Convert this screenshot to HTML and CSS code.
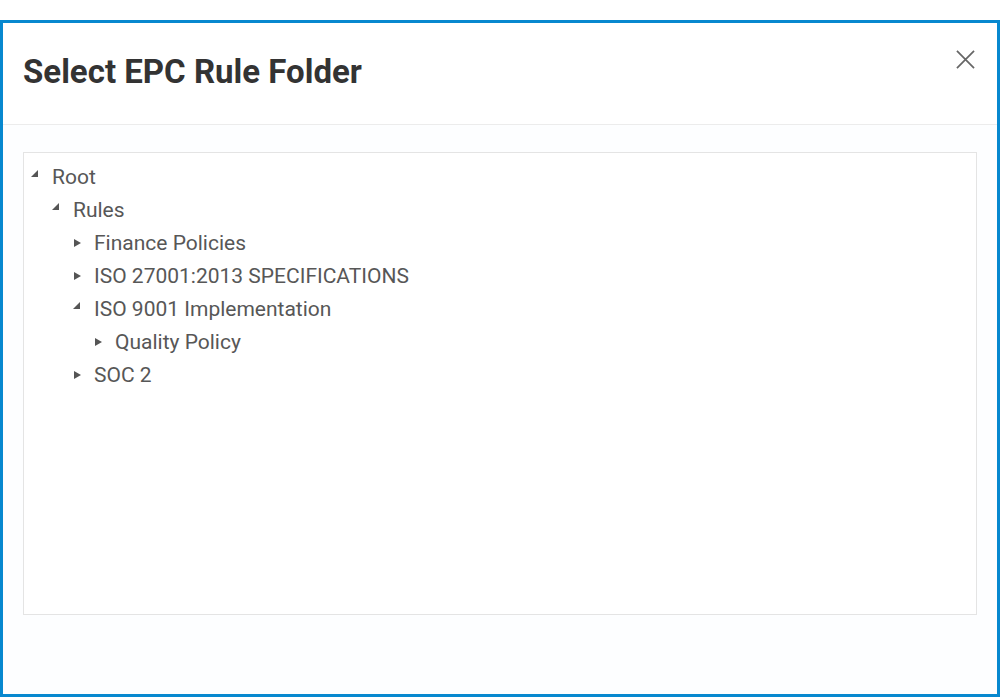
FILE: index.html
```html
<!DOCTYPE html>
<html lang="en">
<head>
<meta charset="utf-8">
<title>Select EPC Rule Folder</title>
<link rel="stylesheet" href="styles.css">
</head>
<body>
<div class="dialog">
  <div class="dialog-header">
    <h1 class="dialog-title">Select EPC Rule Folder</h1>
    <button class="close-btn" aria-label="Close">
      <svg width="19" height="19" viewBox="0 0 20 20"><path d="M1 1 L19 19 M19 1 L1 19" stroke="#666" stroke-width="1.8" fill="none"/></svg>
    </button>
  </div>
  <div class="dialog-body">
    <div class="tree">
      <ul class="tree-list">
        <li>
          <div class="node"><span class="toggle expanded"></span><span class="label">Root</span></div>
          <ul class="tree-list">
            <li>
              <div class="node"><span class="toggle expanded"></span><span class="label">Rules</span></div>
              <ul class="tree-list">
                <li><div class="node"><span class="toggle collapsed"></span><span class="label">Finance Policies</span></div></li>
                <li><div class="node"><span class="toggle collapsed"></span><span class="label">ISO 27001:2013 SPECIFICATIONS</span></div></li>
                <li>
                  <div class="node"><span class="toggle expanded"></span><span class="label">ISO 9001 Implementation</span></div>
                  <ul class="tree-list">
                    <li><div class="node"><span class="toggle collapsed"></span><span class="label">Quality Policy</span></div></li>
                  </ul>
                </li>
                <li><div class="node"><span class="toggle collapsed"></span><span class="label">SOC 2</span></div></li>
              </ul>
            </li>
          </ul>
        </li>
      </ul>
    </div>
  </div>
</div>
</body>
</html>
```

FILE: styles.css
```css
html, body {
  margin: 0;
  padding: 0;
  background: #ffffff;
}
body {
  font-family: Roboto, "Liberation Sans", Arial, sans-serif;
  padding-top: 20px;
}
.dialog {
  box-sizing: border-box;
  height: 677px;
  border: 3px solid #0788cf;
  background: #fdfeff;
  display: flex;
  flex-direction: column;
}
.dialog-header {
  height: 101px;
  background: #ffffff;
  border-bottom: 1px solid #ececec;
  display: flex;
  align-items: flex-start;
  justify-content: space-between;
  padding: 0 19px 0 20px;
}
.dialog-title {
  margin: 29px 0 0 0;
  font-size: 33px;
  font-weight: 700;
  color: #333333;
  line-height: 40px;
}
.close-btn {
  margin-top: 23px;
  background: none;
  border: none;
  padding: 0;
  width: 26px;
  height: 26px;
  display: flex;
  align-items: center;
  justify-content: center;
  cursor: pointer;
}
.dialog-body {
  padding: 27px 20px 0 20px;
}
.tree {
  box-sizing: border-box;
  height: 463px;
  border: 1px solid #e4e4e4;
  background: #ffffff;
  padding: 7px 0 0 5px;
}
.tree-list {
  list-style: none;
  margin: 0;
  padding: 0;
}
.tree-list .tree-list {
  padding-left: 21px;
}
.node {
  display: flex;
  align-items: center;
  height: 33px;
  font-size: 21px;
  color: #575757;
}
.toggle {
  width: 21px;
  height: 33px;
  position: relative;
  flex: none;
}
.toggle.collapsed::before {
  content: "";
  position: absolute;
  left: 3px;
  top: 13px;
  border-left: 7px solid #555555;
  border-top: 4px solid transparent;
  border-bottom: 4px solid transparent;
}
.toggle.expanded::before {
  content: "";
  position: absolute;
  left: 2px;
  top: 10px;
  border-right: 7px solid #555555;
  border-top: 7px solid transparent;
}
.label {
  padding-left: 2px;
  white-space: nowrap;
}
```
